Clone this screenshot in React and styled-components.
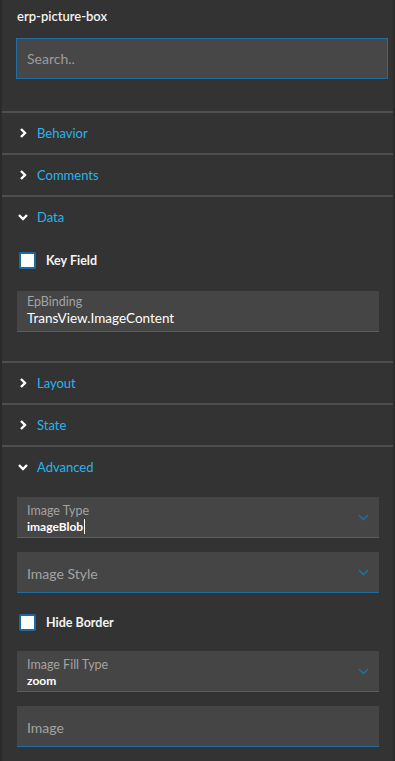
import React from 'react';
import styled, { createGlobalStyle } from 'styled-components';

const GlobalStyle = createGlobalStyle`
  html, body {
    margin: 0;
    padding: 0;
    background: #333333;
  }
  * {
    box-sizing: border-box;
  }
`;

const Panel = styled.div`
  width: 395px;
  height: 761px;
  overflow: hidden;
  background: #333333;
  border-left: 2px solid #2a2a2a;
  border-right: 2px solid #2c2c2c;
  font-family: Lato, 'Open Sans', sans-serif;
  color: #ffffff;
`;

const Top = styled.div`
  padding: 8px 5px 32px 14px;
`;

const Title = styled.div`
  font-size: 13px;
  line-height: 16px;
  font-weight: 600;
  color: #f2f2f2;
  padding-left: 1px;
  margin-bottom: 14px;
`;

const Search = styled.div`
  height: 41px;
  background: #474747;
  border: 1px solid #1e6ea3;
  display: flex;
  align-items: center;
  padding-left: 10px;
  font-size: 14px;
  color: #9c9c9c;
`;

const Section = styled.div`
  border-top: 2px solid #4e4e4e;
`;

const Header = styled.div`
  height: 40px;
  display: flex;
  align-items: center;
  padding-left: 15px;
  gap: 8px;
  font-size: 13px;
  color: #29b3ea;
`;

const Chevron = ({ open }) => (
  <svg width="12" height="12" viewBox="0 0 12 12">
    <polyline
      points={open ? '2,4 6,8 10,4' : '4,2 8,6 4,10'}
      fill="none"
      stroke="#ffffff"
      strokeWidth="2.4"
    />
  </svg>
);

const Body = styled.div`
  padding: ${(p) => p.$pad};
  display: flex;
  flex-direction: column;
  gap: ${(p) => p.$gap}px;
`;

const CheckRow = styled.label`
  display: flex;
  align-items: center;
  gap: 10px;
  height: 30px;
  padding-left: 2px;
  font-size: 12.5px;
  font-weight: 700;
  color: #f4f4f4;
`;

const Box = styled.span`
  width: 17px;
  height: 17px;
  background: #ffffff;
  border: 2px solid #1d6aa0;
  border-radius: 2px;
`;

const Field = styled.div`
  position: relative;
  height: 41px;
  background: #454545;
  border-bottom: 1px solid #1e6ea3;
  display: flex;
  flex-direction: column;
  justify-content: ${(p) => (p.$empty ? 'center' : 'flex-start')};
  padding: ${(p) => (p.$empty ? '2px 10px 0' : p.$select ? '7px 10px 0' : '4px 10px 0')};
`;

const Label = styled.div`
  font-size: 12.5px;
  line-height: 14px;
  color: #a3a3a3;
`;

const Value = styled.div`
  font-size: ${(p) => p.$size || 13.5}px;
  line-height: 18px;
  color: #ffffff;
  font-weight: ${(p) => p.$weight || 400};
`;

const Placeholder = styled.div`
  font-size: 14px;
  color: #a3a3a3;
`;

const Caret = styled.span`
  display: inline-block;
  width: 1px;
  height: 15px;
  background: #ffffff;
  vertical-align: -3px;
  margin-left: 1px;
`;

const Arrow = styled.svg`
  position: absolute;
  right: 10px;
  top: 50%;
  margin-top: -3px;
`;

const DropArrow = () => (
  <Arrow width="11" height="7" viewBox="0 0 11 7">
    <polyline points="1,1 5.5,5.5 10,1" fill="none" stroke="#1e6ea3" strokeWidth="1.6" />
  </Arrow>
);

export default function App() {
  return (
    <Panel>
      <GlobalStyle />
      <Top>
        <Title>erp-picture-box</Title>
        <Search>Search..</Search>
      </Top>

      <Section>
        <Header>
          <Chevron />
          Behavior
        </Header>
      </Section>
      <Section>
        <Header>
          <Chevron />
          Comments
        </Header>
      </Section>
      <Section>
        <Header>
          <Chevron open />
          Data
        </Header>
        <Body $pad="8px 14px 29px 15px" $gap={16}>
          <CheckRow>
            <Box />
            Key Field
          </CheckRow>
          <Field>
            <Label>EpBinding</Label>
            <Value>TransView.ImageContent</Value>
          </Field>
        </Body>
      </Section>
      <Section>
        <Header>
          <Chevron />
          Layout
        </Header>
      </Section>
      <Section>
        <Header>
          <Chevron />
          State
        </Header>
      </Section>
      <Section>
        <Header>
          <Chevron open />
          Advanced
        </Header>
        <Body $pad="10px 14px 20px 15px" $gap={14}>
          <Field $select>
            <Label>Image Type</Label>
            <Value $size={12} $weight={700}>
              imageBlob
              <Caret />
            </Value>
            <DropArrow />
          </Field>
          <Field $empty>
            <Placeholder>Image Style</Placeholder>
            <DropArrow />
          </Field>
          <CheckRow>
            <Box />
            Hide Border
          </CheckRow>
          <Field $select>
            <Label>Image Fill Type</Label>
            <Value $size={12} $weight={700}>zoom</Value>
            <DropArrow />
          </Field>
          <Field $empty>
            <Placeholder>Image</Placeholder>
          </Field>
        </Body>
      </Section>
    </Panel>
  );
}
